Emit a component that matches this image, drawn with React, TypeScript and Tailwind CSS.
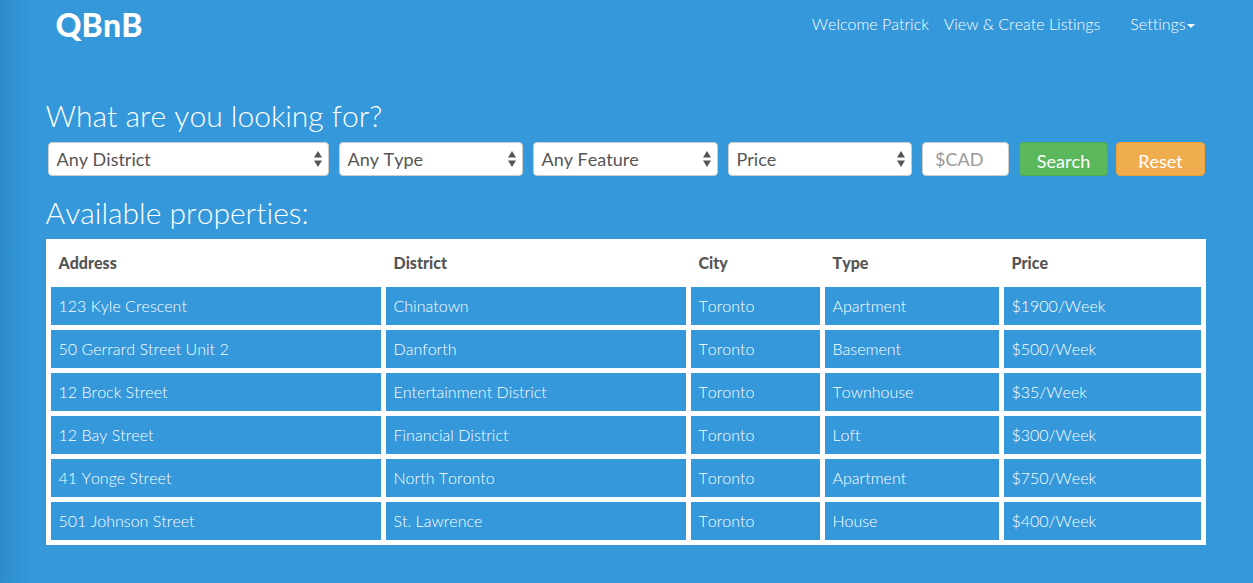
const rows = [
  ["123 Kyle Crescent", "Chinatown", "Toronto", "Apartment", "$1900/Week"],
  ["50 Gerrard Street Unit 2", "Danforth", "Toronto", "Basement", "$500/Week"],
  ["12 Brock Street", "Entertainment District", "Toronto", "Townhouse", "$35/Week"],
  ["12 Bay Street", "Financial District", "Toronto", "Loft", "$300/Week"],
  ["41 Yonge Street", "North Toronto", "Toronto", "Apartment", "$750/Week"],
  ["501 Johnson Street", "St. Lawrence", "Toronto", "House", "$400/Week"],
];

function Picker({ label, width }: { label: string; width: string }) {
  return (
    <button className={`flex h-[34px] items-center justify-between rounded-[4px] border border-[#ccc] bg-white pr-[6px] pl-[7.5px] text-[18px] text-[#555] ${width}`}>
      <span>{label}</span>
      <svg width="8" height="16" viewBox="0 0 8 16" fill="#555">
        <path d="M4 0 8 6.5H0zM4 16 0 9.5h8z" />
      </svg>
    </button>
  );
}

export default function App() {
  return (
    <div className="h-[583px] w-[1253px] overflow-hidden bg-[#3498db] bg-[linear-gradient(to_right,#2f8bc8_0px,#3193d4_16px,#3498db_32px)] font-['Lato',sans-serif] font-light text-white [font-kerning:none] [font-variant-ligatures:none]">
      <nav className="flex h-[50px] items-center pr-[58px] pl-[55.5px] text-[16px]">
        <div className="mr-auto text-[32px] font-black leading-[50px] tracking-[0.1px]">QBnB</div>
        <a className="mr-[15px] -mt-[2px]">Welcome Patrick</a>
        <a className="mr-[30px] -mt-[2px]">View &amp; Create Listings</a>
        <a className="-mt-[2px] flex items-center">
          Settings
          <svg className="mt-[4px] ml-[1.5px]" width="8" height="4" viewBox="0 0 8 4" fill="white"><path d="M0 0h8L4 4z" /></svg>
        </a>
      </nav>
      <main className="pr-[47px] pl-[46px] pt-[49px]">
        <h2 className="-ml-[0.5px] h-[43px] text-[30px] leading-[33px]">What are you looking for?</h2>
        <form className="flex pl-[2px] font-normal">
          <Picker label="Any District" width="w-[281px] mr-[10px]" />
          <Picker label="Any Type" width="w-[184px] mr-[10px]" />
          <Picker label="Any Feature" width="w-[185px] mr-[10px]" />
          <Picker label="Price" width="w-[184px] mr-[10px]" />
          <input placeholder="$CAD" className="mr-[10px] h-[34px] w-[87px] rounded-[4px] border border-[#ccc] bg-white px-3 text-[18px] placeholder:text-[#999]" />
          <button type="button" className="mr-2 h-[34px] w-[89px] rounded-[4px] border border-[#4cae4c] bg-[#5cb85c] pt-1 text-[18px]">Search</button>
          <button type="button" className="h-[34px] w-[89px] rounded-[4px] border border-[#eea236] bg-[#f0ad4e] pt-1 text-[18px]">Reset</button>
        </form>
        <h2 className="-ml-[0.5px] mt-[20px] h-[43px] text-[30px] leading-[33px]">Available properties:</h2>
        <div className="flex flex-col gap-[5px] bg-white p-[5px] text-[16px]">
          <div className="grid h-[38px] grid-cols-[330px_300px_129px_174px_197px] items-center gap-x-[5px] font-black text-[#555]">
            {["Address", "District", "City", "Type", "Price"].map((h) => (
              <div key={h} className="pl-[7.5px]">{h}</div>
            ))}
          </div>
          {rows.map((r) => (
            <div key={r[0]} className="grid h-[38px] grid-cols-[330px_300px_129px_174px_197px] gap-x-[5px]">
              {r.map((c) => (
                <div key={c} className="flex items-center bg-[#3498db] pl-[7.5px]">{c}</div>
              ))}
            </div>
          ))}
        </div>
      </main>
    </div>
  );
}
